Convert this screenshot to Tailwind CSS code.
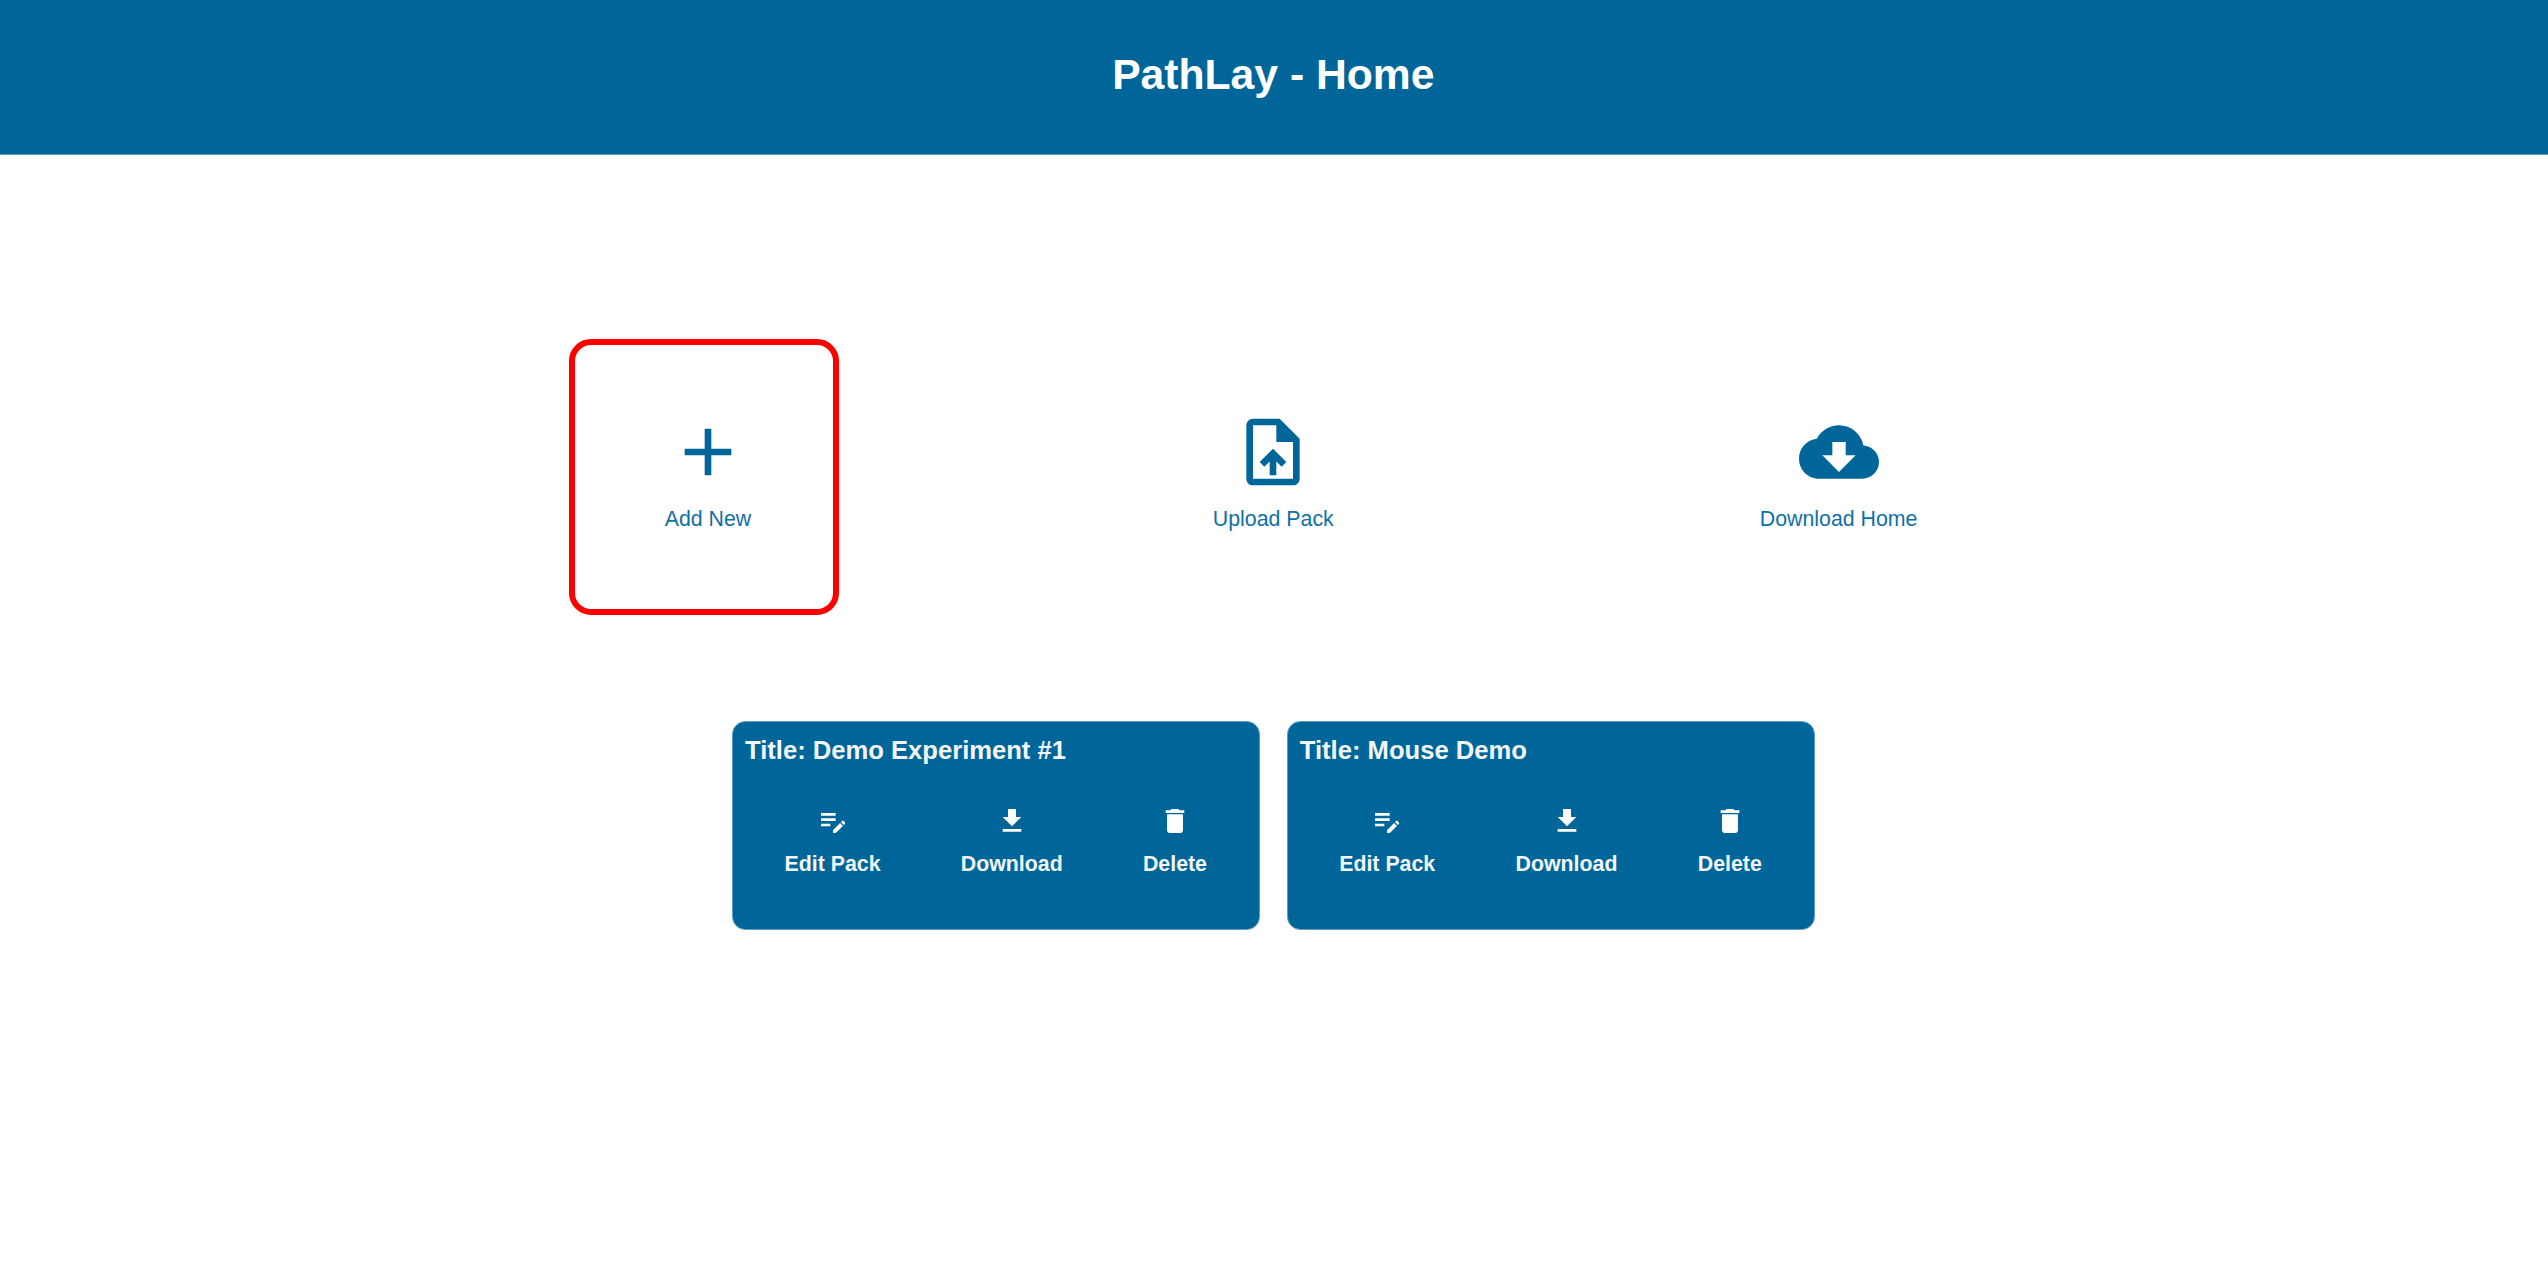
<!DOCTYPE html>
<html lang="en">
<head>
<meta charset="utf-8">
<title>PathLay - Home</title>
<script src="https://cdn.jsdelivr.net/npm/@tailwindcss/browser@4"></script>
</head>
<body class="relative min-h-screen overflow-hidden bg-white font-['Liberation_Sans',Arial,sans-serif] text-[21.333px] leading-6 text-[#006699]">
  <svg class="hidden" aria-hidden="true">
    <symbol id="edit" viewBox="0 0 24 24"><path d="M3 10h11v2H3v-2zm0-2h11V6H3v2zm0 8h7v-2H3v2zm15.01-3.13.71-.71c.39-.39 1.02-.39 1.41 0l.71.71c.39.39.39 1.02 0 1.41l-.71.71-2.12-2.12zm-.71.71-5.3 5.3V21h2.12l5.3-5.3-2.12-2.12z"/></symbol>
    <symbol id="download" viewBox="0 0 24 24"><path d="M19 9h-4V3H9v6H5l7 7 7-7zM5 18v2h14v-2H5z"/></symbol>
    <symbol id="delete" viewBox="0 0 24 24"><path d="M6 19c0 1.1.9 2 2 2h8c1.1 0 2-.9 2-2V7H6v12zM19 4h-3.5l-1-1h-5l-1 1H5v2h14V4z"/></symbol>
  </svg>

  <header class="flex h-[155px] justify-center border-b border-[#5f9ec0] bg-[#006699] pt-[50px] pr-[1.4px]">
    <h1 class="text-[42.667px] leading-[49px] font-bold text-white">PathLay - Home</h1>
  </header>

  <nav class="ml-[425.3px] mt-[257px] grid w-[1696px] grid-cols-3">
    <a class="flex flex-col items-center gap-[15px]">
      <svg class="size-20" viewBox="0 0 24 24" fill="currentColor"><path d="M19 13h-6v6h-2v-6H5v-2h6V5h2v6h6v2z"/></svg>
      <span class="text-[#0f70a5]">Add New</span>
    </a>
    <a class="flex flex-col items-center gap-[15px]">
      <svg class="size-20" viewBox="0 0 24 24" fill="currentColor"><path d="M14 2H6c-1.1 0-1.99.9-1.99 2L4 20c0 1.1.89 2 1.99 2H18c1.1 0 2-.9 2-2V8l-6-6zm4 18H6V4h7v5h5v11zM8 15.01l1.41 1.41L11 14.84V19h2v-4.16l1.59 1.59L16 15.01 12.01 11 8 15.01z"/></svg>
      <span class="text-[#0f70a5]">Upload Pack</span>
    </a>
    <a class="flex flex-col items-center gap-[15px]">
      <svg class="size-20" viewBox="0 0 24 24" fill="currentColor"><path d="M19.35 10.04C18.67 6.59 15.64 4 12 4 9.11 4 6.6 5.64 5.35 8.04 2.34 8.36 0 10.91 0 14c0 3.31 2.69 6 6 6h13c2.76 0 5-2.24 5-5 0-2.64-2.05-4.78-4.65-4.96zM17 13l-5 5-5-5h3V9h4v4h3z"/></svg>
      <span class="text-[#0f70a5]">Download Home</span>
    </a>
  </nav>

  <main class="mt-[190px] flex gap-[26.5px] pl-[732px] font-bold text-white">
    <section class="h-[209px] w-[528px] rounded-[13.333px] border border-[#5f9ec0] bg-[#006699] pt-[14px]">
      <h2 class="px-[12px] text-[25.6px] leading-[29px] text-[#f2f6f9]">Title: Demo Experiment #1</h2>
      <div class="mt-[40.3px] flex justify-between pr-[52px] pl-[51.5px]">
        <a class="flex flex-col items-center gap-[14.7px]"><svg class="size-8" fill="currentColor"><use href="#edit"/></svg><span class="text-[#f2f6f9]">Edit Pack</span></a>
        <a class="flex flex-col items-center gap-[14.7px]"><svg class="size-8" fill="currentColor"><use href="#download"/></svg><span class="text-[#f2f6f9]">Download</span></a>
        <a class="flex flex-col items-center gap-[14.7px]"><svg class="size-8" fill="currentColor"><use href="#delete"/></svg><span class="text-[#f2f6f9]">Delete</span></a>
      </div>
    </section>
    <section class="h-[209px] w-[528px] rounded-[13.333px] border border-[#5f9ec0] bg-[#006699] pt-[14px]">
      <h2 class="px-[12.3px] text-[25.6px] leading-[29px] text-[#f2f6f9]">Title: Mouse Demo</h2>
      <div class="mt-[40.3px] flex justify-between px-[51.7px]">
        <a class="flex flex-col items-center gap-[14.7px]"><svg class="size-8" fill="currentColor"><use href="#edit"/></svg><span class="text-[#f2f6f9]">Edit Pack</span></a>
        <a class="flex flex-col items-center gap-[14.7px]"><svg class="size-8" fill="currentColor"><use href="#download"/></svg><span class="text-[#f2f6f9]">Download</span></a>
        <a class="flex flex-col items-center gap-[14.7px]"><svg class="size-8" fill="currentColor"><use href="#delete"/></svg><span class="text-[#f2f6f9]">Delete</span></a>
      </div>
    </section>
  </main>

  <!-- Highlight ring over the "Add New" action -->
  <div class="pointer-events-none absolute top-[339px] left-[569px] h-[276px] w-[270px] rounded-[22px] border-6 border-[#ff0000]"></div>
</body>
</html>
